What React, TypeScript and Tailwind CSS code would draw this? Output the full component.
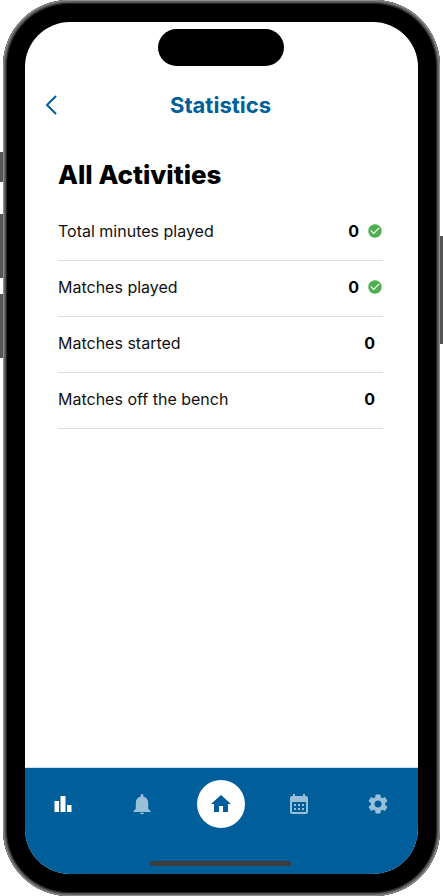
import React from "react";
import { MdCheckCircle, MdHome, MdSettings } from "react-icons/md";

type Stat = { label: string; value: number; verified: boolean };

const stats: Stat[] = [
  { label: "Total minutes played", value: 0, verified: true },
  { label: "Matches played", value: 0, verified: true },
  { label: "Matches started", value: 0, verified: false },
  { label: "Matches off the bench", value: 0, verified: false },
];

function StatsIcon() {
  return (
    <svg viewBox="0 0 24 24" className="size-6" fill="currentColor" aria-hidden="true">
      <path d="M3.5 9H8v11H3.5zM9.5 4h5v16h-5zM16 13h4.5v7H16z" />
    </svg>
  );
}

function BellIcon() {
  return (
    <svg viewBox="0 0 24 24" className="size-6" fill="currentColor" aria-hidden="true">
      <path d="M20.5 18.7V20h-17v-1.300L5.800 17v-6c0-3.300 1.700-5.700 4.800-6.500V3.400a1.400 1.400 0 0 1 2.800 0v1.100c3.100.8 4.800 3.200 4.800 6.500v6zM14 20.800a2 1.500 0 0 1-4 0z" />
    </svg>
  );
}

function CalendarIcon() {
  return (
    <svg viewBox="0 0 24 24" className="size-6" fill="currentColor" aria-hidden="true">
      <path d="M9 12v2H7v-2h2m4 0v2h-2v-2h2m4 0v2h-2v-2h2m2-8a2 2 0 0 1 2 2v14a2 2 0 0 1-2 2H5c-1.110 0-2-.9-2-2V6a2 2 0 0 1 2-2h1V2h2v2h8V2h2v2h1m0 16V10H5v10h14M9 16v2H7v-2h2m4 0v2h-2v-2h2m4 0v2h-2v-2h2z" />
    </svg>
  );
}

function NavButton({ label, active, children }: { label: string; active?: boolean; children: React.ReactNode }) {
  return (
    <button
      type="button"
      aria-label={label}
      className={`flex size-12 items-center justify-center ${active ? "text-white" : "text-[#99bfd9]"}`}
    >
      {children}
    </button>
  );
}

export default function App() {
  return (
    <div className="relative flex min-h-screen bg-white px-[3px] font-['Inter',sans-serif]">
      <span className="absolute left-0 top-[152px] h-[30px] w-[3px] bg-[#555]" />
      <span className="absolute left-0 top-[214px] h-16 w-[3px] bg-[#555]" />
      <span className="absolute left-0 top-[294px] h-16 w-[3px] bg-[#555]" />
      <span className="absolute right-0 top-[236px] h-[108px] w-[3px] bg-[#555]" />

      <div className="flex grow rounded-[66px] bg-black p-[22px] shadow-[inset_0_0_0_1px_#8c8c8c,inset_0_0_0_2px_#666,inset_0_0_0_3px_#505050,inset_0_0_0_4px_#242424]">
        <div className="relative flex grow flex-col overflow-hidden rounded-[45px] bg-white">
          <div className="absolute inset-x-0 top-[7px] flex justify-center pr-[2px]">
            <div className="h-[37px] w-[126px] rounded-full bg-black" />
          </div>

          <header className="mt-[63px] grid h-10 grid-cols-[40px_1fr_40px] items-center pl-[6px] pr-2 text-[#005f9b]">
            <button type="button" aria-label="Back" className="flex size-10 items-center justify-center">
              <svg viewBox="0 0 12 20" className="h-5 w-3" fill="none" stroke="currentColor" strokeWidth="2" strokeLinecap="round" strokeLinejoin="round" aria-hidden="true">
                <path d="M10.500 1.500 2 10l8.500 8.500" />
              </svg>
            </button>
            <h1 className="text-center text-[22px] font-bold leading-8">Statistics</h1>
          </header>

          <main className="grow pl-[33px] pr-[35px] pt-[30px]">
            <h2 className="text-[26px] font-extrabold leading-10 text-black">All Activities</h2>
            <dl className="mt-[10px]">
              {stats.map((stat) => (
                <div key={stat.label} className="flex h-14 items-center justify-between border-b border-[#dcdcdc] pb-1">
                  <dt className="text-base text-[#111]">{stat.label}</dt>
                  <dd className={`flex items-center gap-2 text-base font-bold text-black ${stat.verified ? "" : "pr-2"}`}>
                    {stat.value}
                    {stat.verified && <MdCheckCircle className="size-4 text-[#4caf50]" aria-label="Verified" />}
                  </dd>
                </div>
              ))}
            </dl>
          </main>

          <nav className="flex h-[107px] flex-col items-center justify-between border-t border-[#ccdfeb] bg-[#005f9b] pb-2 pr-[2px] pt-3">
            <div className="flex w-full justify-between px-[14px]">
              <NavButton label="Statistics" active>
                <StatsIcon />
              </NavButton>
              <NavButton label="Notifications">
                <BellIcon />
              </NavButton>
              <button type="button" aria-label="Home" className="flex size-12 items-center justify-center rounded-full bg-white text-[#005f9b]">
                <MdHome className="size-6" />
              </button>
              <NavButton label="Calendar">
                <CalendarIcon />
              </NavButton>
              <NavButton label="Settings">
                <MdSettings className="size-6" />
              </NavButton>
            </div>
            <div className="h-[5px] w-[141px] rounded-full bg-[#3c3c3c]" />
          </nav>
        </div>
      </div>
    </div>
  );
}
